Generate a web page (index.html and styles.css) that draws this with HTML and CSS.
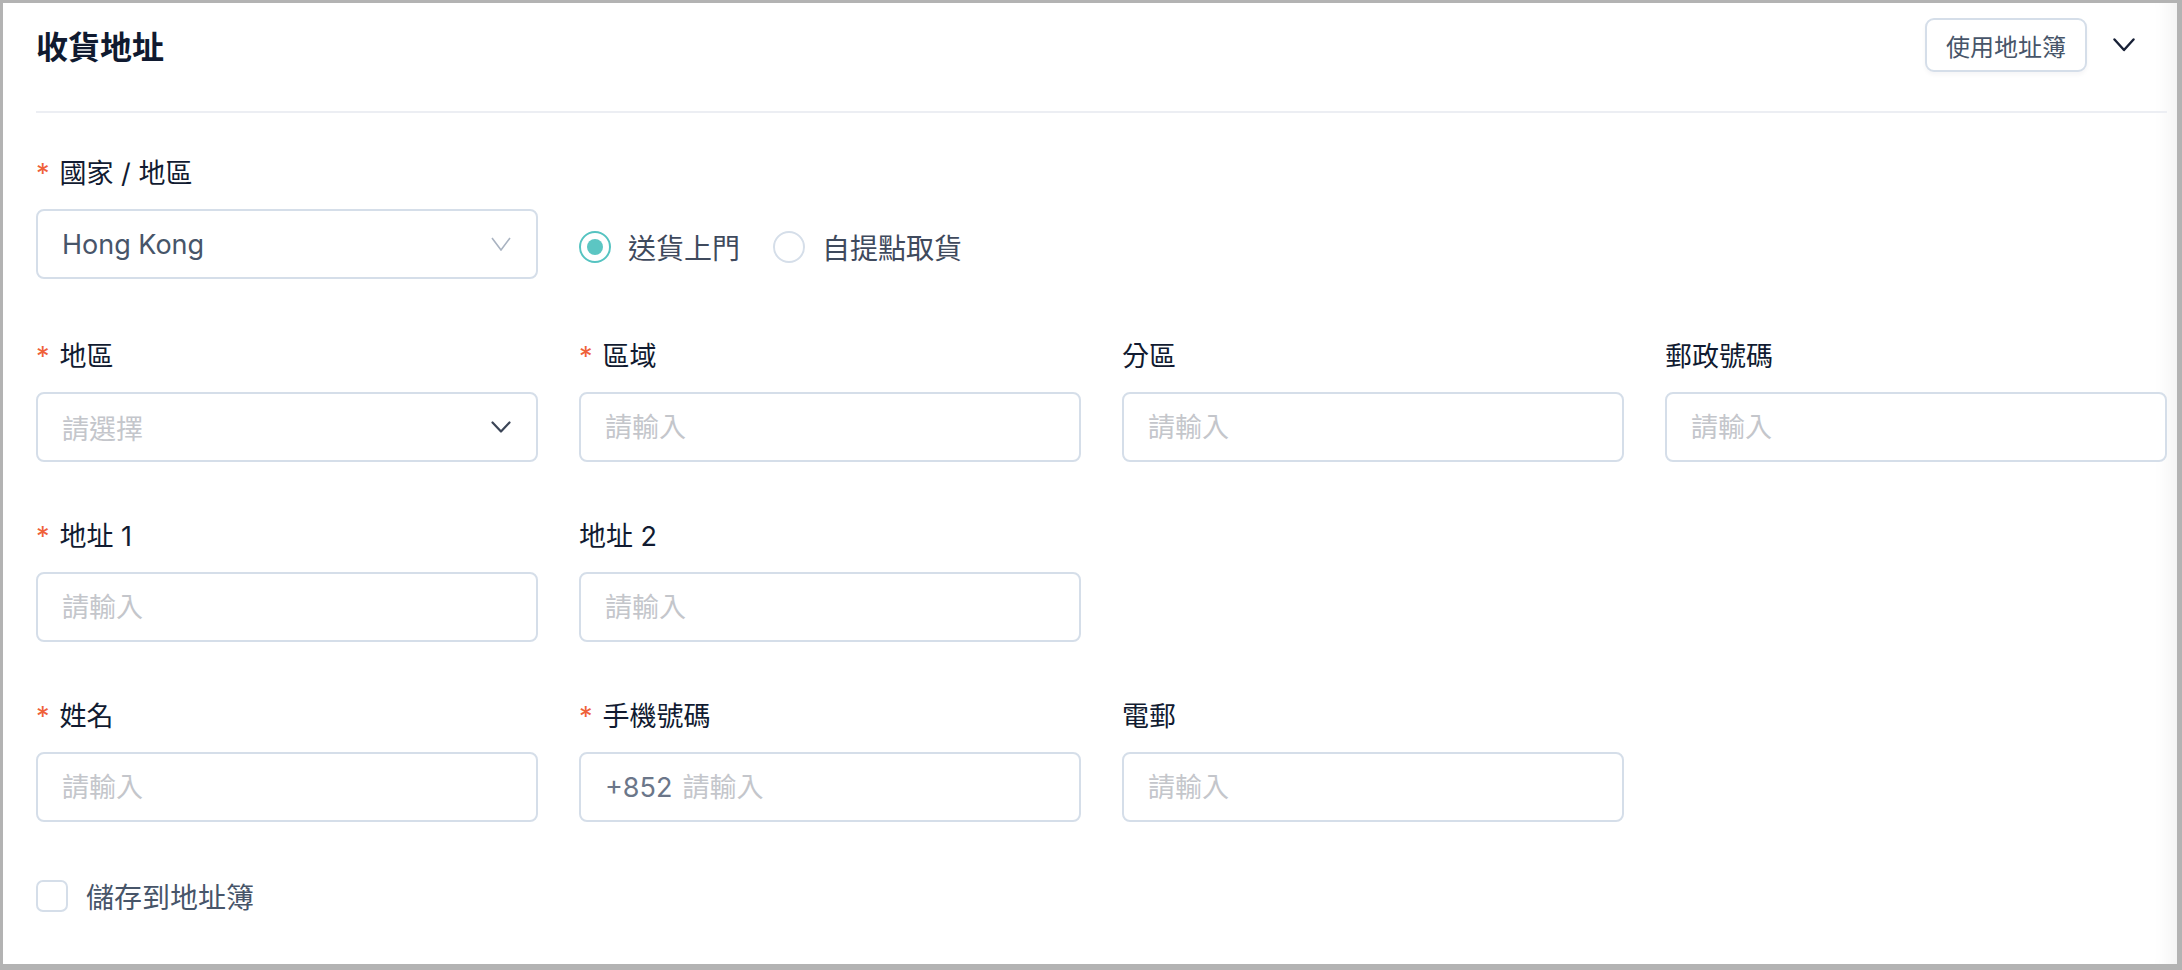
FILE: index.html
```html
<!DOCTYPE html>
<html lang="zh-Hant">
<head>
    <meta charset="UTF-8">
    <meta name="viewport" content="width=device-width, initial-scale=1.0">
    <title>收貨地址</title>
    <link rel="stylesheet" href="styles.css">
</head>
<body>
    <div class="frame">
        <div class="header">
            <h1 class="title">收貨地址</h1>
            <div class="header-right">
                <button type="button" class="btn">使用地址簿</button>
                <svg class="collapse" width="22" height="14" viewBox="0 0 22 14">
                    <polyline points="1.5,1.5 11,12 20.5,1.5" fill="none" stroke="#172036" stroke-width="2.4" stroke-linecap="round" stroke-linejoin="round"/>
                </svg>
            </div>
        </div>

        <form class="grid">
            <div class="field first">
                <label class="label"><span class="req">*</span>國家 / 地區</label>
                <div class="select">
                    <span class="value">Hong Kong</span>
                    <svg width="20" height="14" viewBox="0 0 20 14">
                        <polyline points="1,1 10,13 19,1" fill="none" stroke="#a9b3c1" stroke-width="1.6"/>
                    </svg>
                </div>
            </div>
            <div class="radios">
                <label class="radio"><span class="dot checked"></span>送貨上門</label>
                <label class="radio"><span class="dot"></span>自提點取貨</label>
            </div>

            <div class="field new-row">
                <label class="label"><span class="req">*</span>地區</label>
                <div class="select">
                    <span class="placeholder">請選擇</span>
                    <svg width="20" height="12" viewBox="0 0 20 12">
                        <polyline points="1.5,1.5 10,10.5 18.5,1.5" fill="none" stroke="#3b4557" stroke-width="2.2" stroke-linecap="round" stroke-linejoin="round"/>
                    </svg>
                </div>
            </div>
            <div class="field">
                <label class="label"><span class="req">*</span>區域</label>
                <input class="input" type="text" placeholder="請輸入">
            </div>
            <div class="field">
                <label class="label">分區</label>
                <input class="input" type="text" placeholder="請輸入">
            </div>
            <div class="field">
                <label class="label">郵政號碼</label>
                <input class="input" type="text" placeholder="請輸入">
            </div>

            <div class="field new-row">
                <label class="label"><span class="req">*</span>地址 1</label>
                <input class="input" type="text" placeholder="請輸入">
            </div>
            <div class="field">
                <label class="label">地址 2</label>
                <input class="input" type="text" placeholder="請輸入">
            </div>

            <div class="field new-row">
                <label class="label"><span class="req">*</span>姓名</label>
                <input class="input" type="text" placeholder="請輸入">
            </div>
            <div class="field">
                <label class="label"><span class="req">*</span>手機號碼</label>
                <div class="input phone">
                    <span class="prefix">+852</span>
                    <input type="text" placeholder="請輸入">
                </div>
            </div>
            <div class="field">
                <label class="label">電郵</label>
                <input class="input" type="text" placeholder="請輸入">
            </div>
        </form>

        <label class="save">
            <span class="box"></span>
            儲存到地址簿
        </label>
    </div>
</body>
</html>
```

FILE: styles.css
```css
*{
    margin: 0;
    padding: 0;
    box-sizing: border-box;
}
body{
    font-family: Inter, "Noto Sans CJK TC", sans-serif;
    background: #b3b3b3;
}
.frame{
    width: 2182px;
    height: 970px;
    background: #fff;
    border-style: solid;
    border-color: #b3b3b3;
    border-width: 3px 5px 6px 3px;
    padding: 16px 10px 0 33px;
    box-shadow: inset -26px 0 22px -22px rgba(0, 0, 0, 0.07);
}

.header{
    display: flex;
    align-items: center;
    height: 94px;
    padding-bottom: 40px;
    border-bottom: 2px solid #eceef3;
}
.title{
    flex: 1;
    font-size: 32px;
    font-weight: 700;
    color: #101a30;
}
.header-right{
    display: flex;
    align-items: center;
    gap: 26px;
    padding-right: 32px;
}
.btn{
    height: 54px;
    padding: 0 19px;
    font-family: inherit;
    font-size: 24px;
    color: #475569;
    background: #fff;
    border: 2px solid #d5dee9;
    border-radius: 9px;
    box-shadow: 0 3px 4px rgba(15, 23, 42, 0.04);
}
.collapse{
    display: block;
}

.grid{
    display: grid;
    grid-template-columns: repeat(4, minmax(0, 1fr));
    column-gap: 41px;
    row-gap: 53px;
    margin-top: 39px;
}
.field{
    min-width: 0;
}
.first{
    margin-bottom: 3px;
}
.new-row{
    grid-column-start: 1;
}
.label{
    display: block;
    font-size: 27px;
    line-height: 36px;
    padding-top: 4px;
    margin-bottom: 17px;
    color: #111b31;
}
.req{
    color: #ef6139;
    margin-right: 10px;
}

.input, .select{
    display: flex;
    align-items: center;
    width: 100%;
    min-width: 0;
    height: 70px;
    padding: 0 24px;
    border: 2px solid #d5dee9;
    border-radius: 8px;
    background: #fff;
    font-family: inherit;
    font-size: 27px;
    color: #475569;
    outline: none;
}
.select{
    justify-content: space-between;
    padding-right: 25px;
}
.select svg{
    display: block;
}
.value{
    color: #475569;
}
.placeholder{
    color: #c4c6cb;
}
input::placeholder{
    color: #c4c6cb;
}
.phone .prefix{
    color: #6b7689;
    margin-right: 10px;
}
.phone input{
    flex: 1;
    min-width: 0;
    border: none;
    outline: none;
    font-family: inherit;
    font-size: 27px;
    color: #475569;
    background: transparent;
}

.radios{
    grid-column: 2 / span 3;
    align-self: end;
    height: 70px;
    display: flex;
    align-items: center;
    gap: 33px;
}
.radio{
    display: flex;
    align-items: center;
    gap: 17px;
    font-size: 28px;
    color: #3f4a5d;
}
.dot{
    width: 32px;
    height: 32px;
    border-radius: 50%;
    border: 2px solid #d5dee9;
    display: flex;
    align-items: center;
    justify-content: center;
}
.dot.checked{
    border: 2.5px solid #55c3c1;
}
.dot.checked::after{
    content: "";
    width: 16px;
    height: 16px;
    border-radius: 50%;
    background: #5cc6c3;
}

.save{
    display: flex;
    align-items: center;
    gap: 18px;
    margin-top: 54px;
    font-size: 28px;
    color: #475569;
}
.box{
    width: 32px;
    height: 32px;
    border: 2px solid #d5dee9;
    border-radius: 7px;
}
```
